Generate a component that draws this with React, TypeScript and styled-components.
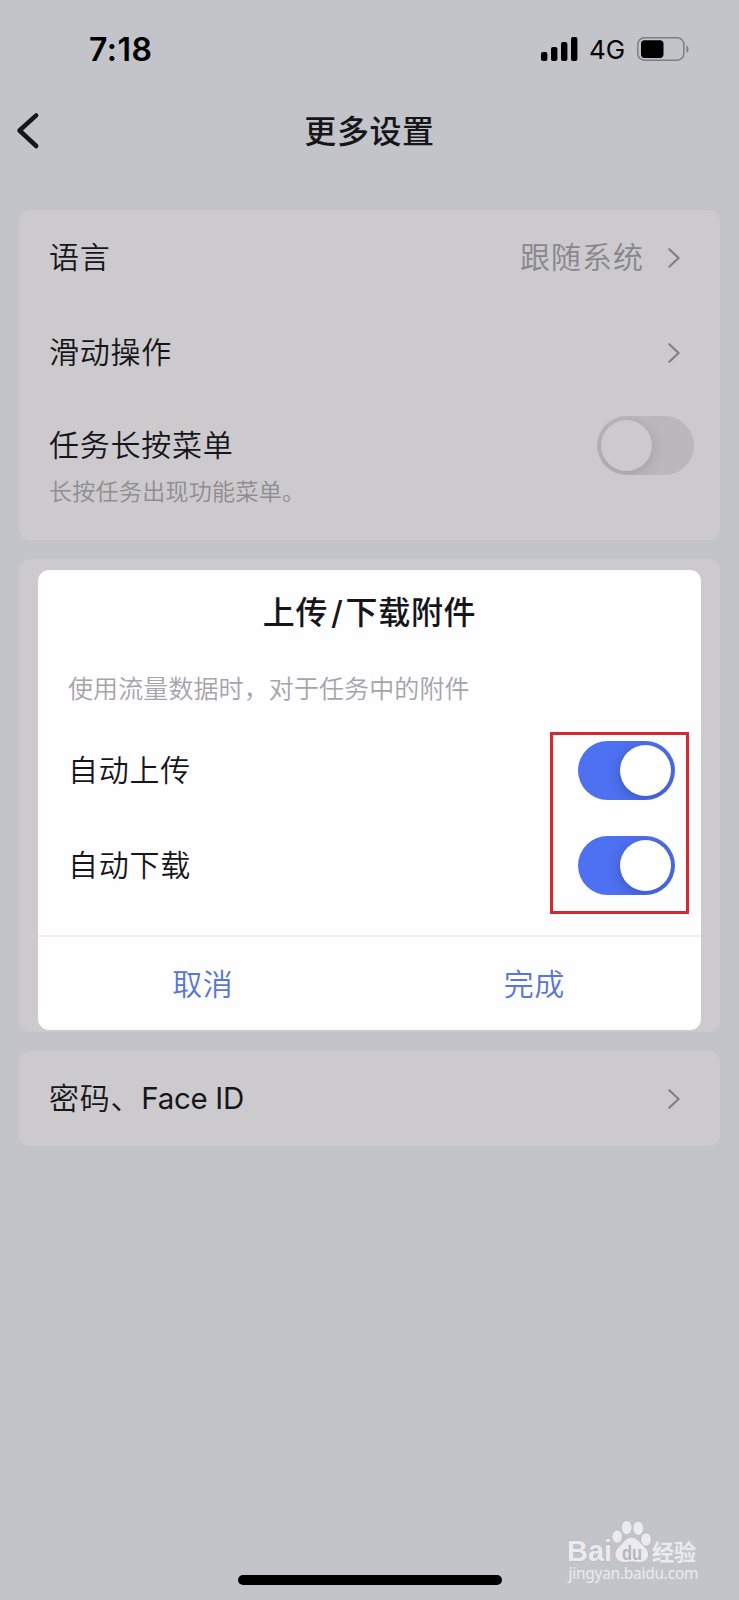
import React from 'react';
import styled, { createGlobalStyle } from 'styled-components';

const cjk = `Inter, "Noto Sans CJK SC", sans-serif`;

const GlobalStyle = createGlobalStyle`
  * { box-sizing: border-box; }
  body { margin: 0; background: #c3c4c9; }
`;

const Screen = styled.div`
  position: relative;
  display: flex;
  flex-direction: column;
  width: 739px;
  height: 1600px;
  overflow: hidden;
  background: #c3c4c9;
  color: #16161a;
  font-family: ${cjk};
`;

const StatusBar = styled.header`
  display: flex;
  align-items: center;
  justify-content: space-between;
  height: 98px;
  padding: 0 50px 0 89px;
  color: #000;
`;

const Clock = styled.time`
  padding-top: 2px;
  font: 600 32px/40px Inter, sans-serif;
  letter-spacing: 0.5px;
`;

const StatusIcons = styled.div`
  display: flex;
  align-items: center;
`;

const Network = styled.span`
  width: 48px;
  margin-left: 11px;
  font: 400 26px/32px Inter, sans-serif;
  letter-spacing: 0;
  white-space: nowrap;
  padding-top: 2px;
`;

const NavBar = styled.nav`
  display: grid;
  grid-template-columns: 60px 1fr 60px;
  align-items: center;
  height: 66px;
`;

const BackButton = styled.button`
  display: flex;
  padding: 0 0 0 15px;
  border: 0;
  background: none;
`;

const Title = styled.h1`
  margin: 2px 0 0;
  font-size: 32px;
  line-height: 40px;
  font-weight: 500;
  letter-spacing: 0.6px;
  text-align: center;
`;

const Cards = styled.main`
  display: flex;
  flex-direction: column;
  gap: 19px;
  padding: 46px 19px 0;
`;

const Card = styled.section<{ $height: number }>`
  height: ${(p) => p.$height}px;
  border-radius: 11px;
  background: #cccacd;
`;

const Row = styled.div<{ $height?: number }>`
  display: flex;
  align-items: center;
  justify-content: space-between;
  height: ${(p) => p.$height ?? 95}px;
  padding: 0 26px 0 30px;
`;

const Label = styled.span`
  padding-bottom: 1px;
  font-size: 30px;
  line-height: 40px;
  font-weight: 350;
  letter-spacing: 0.75px;
  white-space: nowrap;
`;

const Latin = styled.span`
  font-size: 29.5px;
  font-weight: 400;
  letter-spacing: -0.3px;
`;

const RowEnd = styled.span`
  display: flex;
  align-items: center;
  padding-right: 14px;
`;

const Value = styled(Label)`
  margin-right: 24px;
  color: #87868a;
  letter-spacing: 1px;
`;

const Hint = styled.p<{ $size: number; $spacing: number }>`
  margin: 0;
  padding-left: 30px;
  color: #8d8c90;
  font-size: ${(p) => p.$size}px;
  line-height: 32px;
  font-weight: 350;
  letter-spacing: ${(p) => p.$spacing}px;
`;

const CardHint = styled(Hint)`
  margin-top: -15px;
`;

const Track = styled.button<{ $on?: boolean }>`
  display: flex;
  justify-content: ${(p) => (p.$on ? 'flex-end' : 'flex-start')};
  flex: none;
  width: 97px;
  height: 59px;
  padding: 4px;
  border: 0;
  border-radius: 30px;
  overflow: hidden;
  background: ${(p) => (p.$on ? '#4e71f2' : '#bab8bb')};
`;

const Knob = styled.span<{ $on?: boolean }>`
  width: 51px;
  height: 51px;
  border-radius: 50%;
  background: ${(p) => (p.$on ? '#fff' : '#cccacd')};
  box-shadow: 0 3px 14px rgba(0, 0, 0, ${(p) => (p.$on ? 0.25 : 0.14)});
`;

const Dialog = styled.div`
  position: absolute;
  top: 570px;
  left: 38px;
  display: flex;
  flex-direction: column;
  width: 663px;
  height: 460px;
  border-radius: 11px;
  background: #fefdff;
`;

const DialogTitle = styled.h2`
  margin: 23px 0 0;
  font-size: 32px;
  line-height: 40px;
  font-weight: 500;
  letter-spacing: 0.65px;
  text-align: center;
`;

const Slash = styled.span`
  margin: 0 2px 0 3px;
`;

const DialogHint = styled(Hint)`
  margin: 40px 0 18px;
  color: #a5a4a8;
`;

const Actions = styled.footer`
  display: grid;
  grid-template-columns: 1fr 1fr;
  flex: 1;
  margin-top: 22px;
  border-top: 2px solid #efeff2;
`;

const Action = styled.button`
  padding: 0 2px 0 0;
  border: 0;
  background: none;
  color: #5876d4;
  font: 350 30px/40px ${cjk};
  letter-spacing: 0.6px;
`;

const Highlight = styled.div`
  position: absolute;
  top: 162px;
  left: 512px;
  width: 139px;
  height: 182px;
  border: 3px solid #d22a33;
`;

const HomeIndicator = styled.div`
  position: absolute;
  top: 1575px;
  left: 238px;
  width: 264px;
  height: 10px;
  border-radius: 5px;
  background: #000;
`;

const Watermark = styled.svg`
  position: absolute;
  top: 1510px;
  left: 560px;
`;

const Chevron = () => (
  <svg width="12" height="20" viewBox="0 0 12 20" fill="none" stroke="#808084" strokeWidth="2.2" strokeLinecap="round" strokeLinejoin="round">
    <path d="M1.3 1.3 10.6 10 1.3 18.7" />
  </svg>
);

const Switch = ({ on }: { on?: boolean }) => (
  <Track $on={on} role="switch" aria-checked={!!on}>
    <Knob $on={on} />
  </Track>
);

const Signal = () => (
  <svg width="37" height="24" viewBox="0 0 37 24">
    <rect x="0" y="15" width="6.4" height="9" rx="2" />
    <rect x="10" y="10" width="6.4" height="14" rx="2" />
    <rect x="20" y="5" width="6.4" height="19" rx="2" />
    <rect x="30" y="0" width="6.4" height="24" rx="2" />
  </svg>
);

const Battery = () => (
  <svg width="52" height="24" viewBox="0 0 52 24">
    <rect x="0.8" y="0.8" width="46" height="22.4" rx="6.5" fill="none" stroke="#7d7d82" strokeWidth="1.5" />
    <rect x="4" y="3.3" width="22.5" height="17.6" rx="3.6" />
    <path d="M49.5 8.2c2.7 1.2 2.7 6.6 0 7.8z" fill="#7d7d82" />
  </svg>
);

export default function App() {
  return (
    <>
      <GlobalStyle />
      <Screen>
        <StatusBar>
          <Clock>7:18</Clock>
          <StatusIcons>
            <Signal />
            <Network>4G</Network>
            <Battery />
          </StatusIcons>
        </StatusBar>
        <NavBar>
          <BackButton aria-label="返回">
            <svg width="26" height="38" viewBox="0 0 26 38" fill="none" stroke="#16161a" strokeWidth="4.5" strokeLinecap="round" strokeLinejoin="round">
              <path d="M21.2 3.4 4.5 18.5 21.2 34" />
            </svg>
          </BackButton>
          <Title>更多设置</Title>
        </NavBar>
        <Cards>
          <Card $height={330}>
            <Row>
              <Label>语言</Label>
              <RowEnd>
                <Value>跟随系统</Value>
                <Chevron />
              </RowEnd>
            </Row>
            <Row>
              <Label>滑动操作</Label>
              <RowEnd>
                <Chevron />
              </RowEnd>
            </Row>
            <Row $height={91}>
              <Label>任务长按菜单</Label>
              <Switch />
            </Row>
            <CardHint $size={23} $spacing={0.3}>长按任务出现功能菜单。</CardHint>
          </Card>
          <Card $height={473} />
          <Card $height={95}>
            <Row>
              <Label>密码、<Latin>Face ID</Latin></Label>
              <RowEnd>
                <Chevron />
              </RowEnd>
            </Row>
          </Card>
        </Cards>

        <Dialog role="dialog">
          <DialogTitle>上传<Slash>/</Slash>下载附件</DialogTitle>
          <DialogHint $size={25} $spacing={0.1}>使用流量数据时，对于任务中的附件</DialogHint>
          <Row>
            <Label>自动上传</Label>
            <Switch on />
          </Row>
          <Row>
            <Label>自动下载</Label>
            <Switch on />
          </Row>
          <Actions>
            <Action>取消</Action>
            <Action>完成</Action>
          </Actions>
          <Highlight />
        </Dialog>

        <Watermark width="150" height="84" viewBox="0 0 150 84" fill="#ebebef">
          <g stroke="#b4b5bb" strokeWidth="1" paintOrder="stroke">
            <text x="7" y="51" fontFamily="Liberation Sans, sans-serif" fontWeight="700" fontSize="29.5" textLength="45" lengthAdjust="spacingAndGlyphs">Bai</text>
            <ellipse cx="57.2" cy="26.5" rx="4.9" ry="6.2" />
            <ellipse cx="66.7" cy="17.5" rx="5" ry="6.8" />
            <ellipse cx="78.3" cy="18.2" rx="5" ry="6.8" />
            <ellipse cx="86" cy="29.5" rx="4.9" ry="6.2" />
            <path d="M71.5 27.5c-5 0-7 4-10.500 7.500c-4 3.500-6 6.200-5.500 10c.5 4.800 4.500 7.200 8.500 7.200c3 0 4.500-.7 7.500-.7s5 .7 8 .7c4.500 0 8.200-2.700 8.600-7.500c.3-4-2.400-6.700-5.600-9.700c-3.500-3.500-6-7.500-11-7.500z" />
          </g>
          <text x="62" y="50" fontFamily="Liberation Sans, sans-serif" fontWeight="700" fontSize="20" fill="#b4b5bb" textLength="20" lengthAdjust="spacingAndGlyphs">du</text>
          <text x="92" y="49.5" fontFamily="Noto Sans CJK SC, sans-serif" fontWeight="700" fontSize="22" textLength="44">经验</text>
          <text x="8.5" y="69" fontFamily="Noto Sans, sans-serif" fontSize="15.5" textLength="130">jingyan.baidu.com</text>
        </Watermark>
        <HomeIndicator />
      </Screen>
    </>
  );
}
